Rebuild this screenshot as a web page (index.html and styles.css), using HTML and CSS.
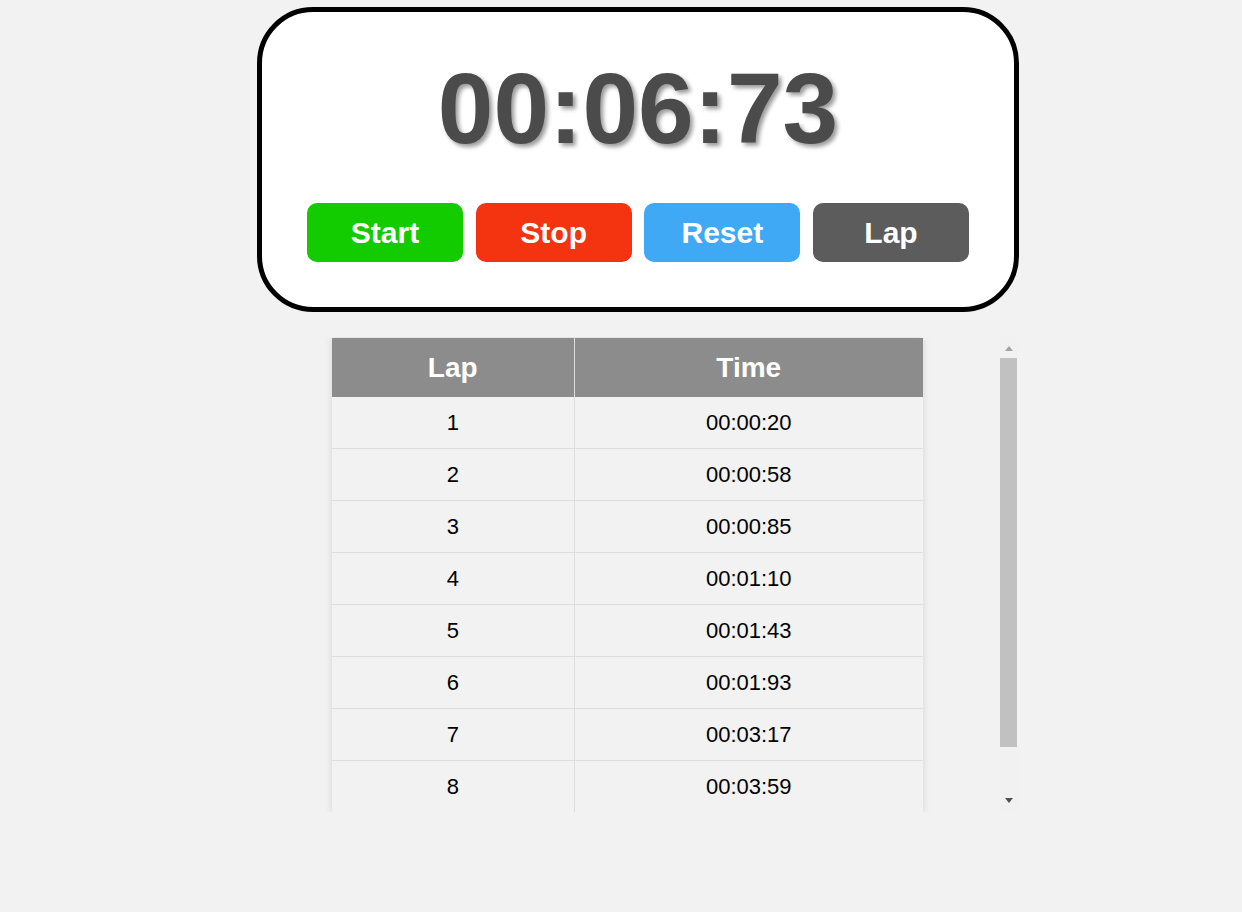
FILE: index.html
```html
<!DOCTYPE html>
<html lang="en">
<head>
<meta charset="utf-8">
<title>Stopwatch</title>
<link rel="stylesheet" href="styles.css">
</head>
<body>
  <div class="card">
    <div class="timer">00:06:73</div>
    <div class="controls">
      <button class="btn btn-start">Start</button>
      <button class="btn btn-stop">Stop</button>
      <button class="btn btn-reset">Reset</button>
      <button class="btn btn-lap">Lap</button>
    </div>
  </div>
  <div class="laps">
    <div class="laps-view">
      <table class="lap-table">
        <colgroup><col class="c-lap"><col class="c-time"></colgroup>
        <thead>
          <tr><th>Lap</th><th>Time</th></tr>
        </thead>
        <tbody>
          <tr><td>1</td><td>00:00:20</td></tr>
          <tr><td>2</td><td>00:00:58</td></tr>
          <tr><td>3</td><td>00:00:85</td></tr>
          <tr><td>4</td><td>00:01:10</td></tr>
          <tr><td>5</td><td>00:01:43</td></tr>
          <tr><td>6</td><td>00:01:93</td></tr>
          <tr><td>7</td><td>00:03:17</td></tr>
          <tr><td>8</td><td>00:03:59</td></tr>
        </tbody>
      </table>
    </div>
    <div class="scrollbar" aria-hidden="true">
      <div class="sb-btn sb-up"><span class="arrow-up"></span></div>
      <div class="sb-track"><div class="sb-thumb"></div></div>
      <div class="sb-btn sb-down"><span class="arrow-down"></span></div>
    </div>
  </div>
</body>
</html>
```

FILE: styles.css
```css
html, body {
  margin: 0;
  padding: 0;
}

body {
  background: #f2f2f2;
  font-family: "Liberation Sans", Arial, sans-serif;
  padding-top: 7px;
}

.card {
  box-sizing: border-box;
  width: 762px;
  height: 305px;
  margin-left: 257px;
  border: 5px solid #000;
  border-radius: 56px;
  background: #fff;
  display: flex;
  flex-direction: column;
  align-items: center;
}

.timer {
  margin-top: 46px;
  font-size: 100px;
  line-height: 100px;
  font-weight: bold;
  color: #4b4b4b;
  text-shadow: 3px 3px 4px rgba(0, 0, 0, 0.4);
}

.controls {
  margin-top: 45px;
  display: flex;
  gap: 12.7px;
}

.btn {
  width: 156px;
  height: 59px;
  border: none;
  border-radius: 10px;
  color: #fff;
  font-family: "Liberation Sans", Arial, sans-serif;
  font-size: 30px;
  font-weight: bold;
  padding: 0;
  cursor: pointer;
}

.btn-start { background: #12cc00; }
.btn-stop { background: #f43310; }
.btn-reset { background: #40a9f5; }
.btn-lap { background: #5c5c5c; }

.laps {
  display: flex;
  height: 475px;
  margin-top: 25px;
  margin-left: 317px;
  width: 700px;
}

.laps-view {
  box-sizing: border-box;
  width: 683px;
  height: 475px;
  padding: 1px 0 0 15px;
  overflow: hidden;
}

.scrollbar {
  width: 17px;
  height: 475px;
  background: #f1f1f1;
  display: flex;
  flex-direction: column;
}

.sb-btn {
  box-sizing: border-box;
  height: 17px;
  display: flex;
  align-items: flex-start;
  justify-content: center;
}

.sb-up { padding-top: 9px; }
.sb-down { padding-top: 3px; }

.arrow-up {
  width: 0;
  height: 0;
  border-left: 4px solid transparent;
  border-right: 4px solid transparent;
  border-bottom: 5px solid #a3a3a3;
}

.arrow-down {
  width: 0;
  height: 0;
  border-left: 4px solid transparent;
  border-right: 4px solid transparent;
  border-top: 5px solid #505050;
}

.sb-track {
  flex: 1;
  padding-top: 4px;
}

.sb-thumb {
  height: 389px;
  background: #c1c1c1;
}

.lap-table {
  width: 591px;
  table-layout: fixed;
  border-collapse: collapse;
  background: #f2f2f2;
  box-shadow: 0 0 8px rgba(0, 0, 0, 0.12);
}

.c-lap { width: 242px; }
.c-time { width: 349px; }

.lap-table th {
  height: 59px;
  padding: 0;
  background: #8c8c8c;
  color: #fff;
  font-size: 28px;
  font-weight: bold;
  text-align: center;
  vertical-align: middle;
}

.lap-table th:first-child {
  border-right: 1px solid #dddddd;
}

.lap-table td {
  height: 51px;
  padding: 0;
  border-bottom: 1px solid #dddddd;
  font-size: 22px;
  color: #000;
  text-align: center;
  vertical-align: middle;
}

.lap-table td:first-child {
  border-right: 1px solid #dddddd;
}
```
